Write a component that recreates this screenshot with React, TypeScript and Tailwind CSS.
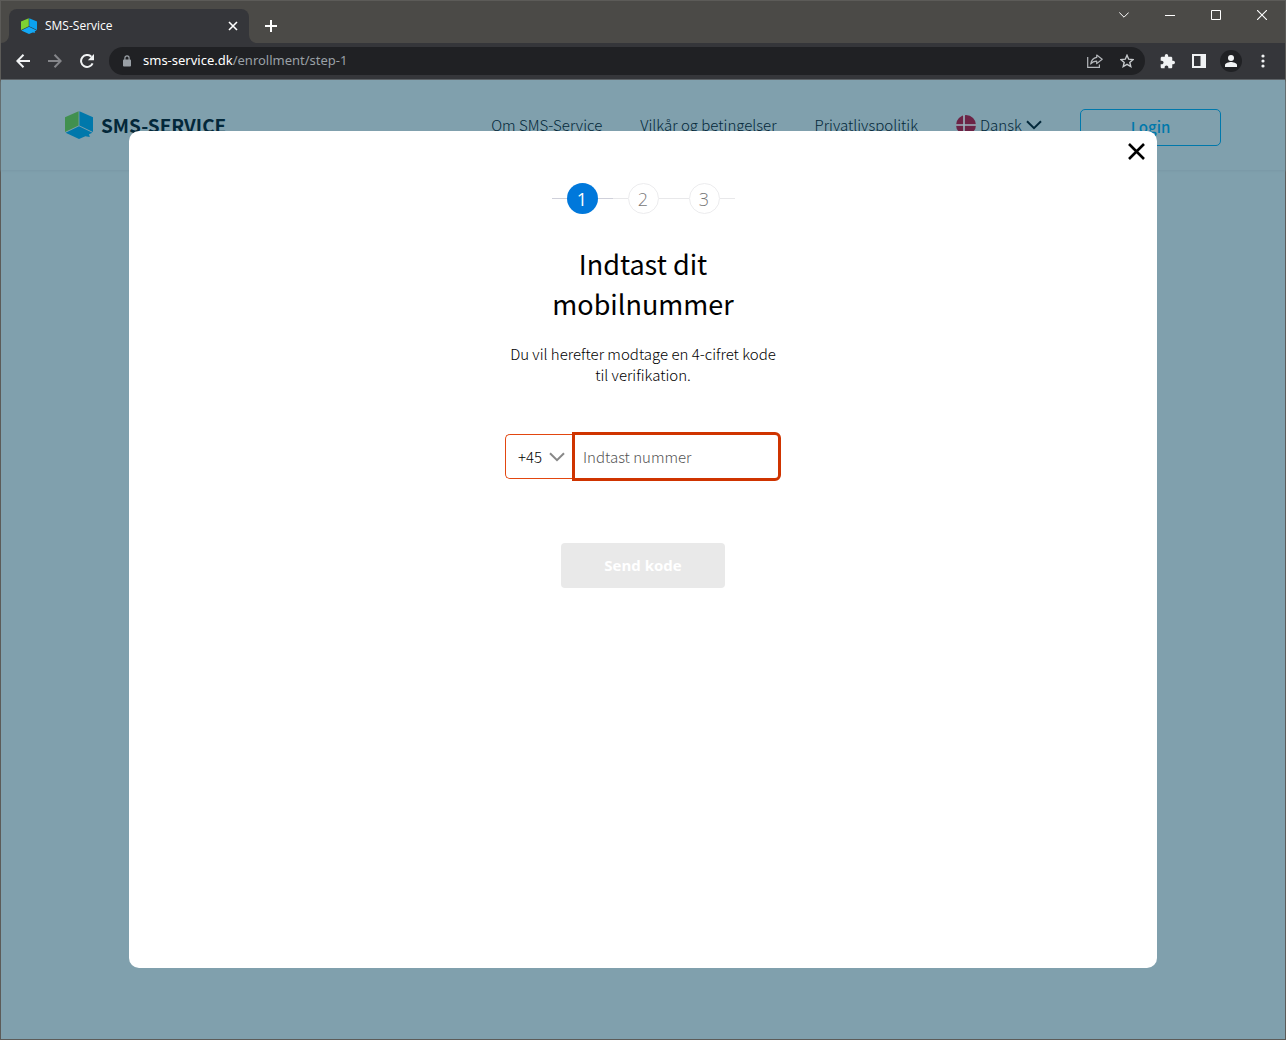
import { clsx } from "clsx";

const navLinks = [
  { label: "Om SMS-Service", href: "#om" },
  { label: "Vilkår og betingelser", href: "#vilkaar" },
  { label: "Privatlivspolitik", href: "#privatliv" },
];

const steps = [1, 2, 3];

function Cube({ className, left, right, bottom }: { className: string; left: string; right: string; bottom: string }) {
  return (
    <svg viewBox="0 0 28 28" className={className} aria-hidden="true">
      <path d="M13.6 0.3V14.4L0 21V6.2Z" fill={left} />
      <path d="M14.4 0.3L28 6.2V21L14.4 14.4Z" fill={right} />
      <path d="M14 15.2L27.4 21.8L24 23.3L24.8 26L20.4 25.2L14 28L0.6 21.8Z" fill={bottom} />
    </svg>
  );
}

function Chevron({ className }: { className: string }) {
  return (
    <svg viewBox="0 0 16 10" className={className} fill="none" stroke="currentColor" strokeWidth="2" aria-hidden="true">
      <path d="M1 1.2L8 8.2L15 1.2" />
    </svg>
  );
}

function TabStrip() {
  return (
    <div className="flex h-[42px] items-end bg-[#4b4a47] pl-2">
      <div className="relative flex h-[34px] w-[240px] items-center rounded-t-lg bg-[#35363a] pl-3 pr-2">
        <svg viewBox="0 0 8 8" className="absolute bottom-0 -left-2 size-2" aria-hidden="true">
          <path d="M8 0V8H0A8 8 0 0 0 8 0Z" fill="#35363a" />
        </svg>
        <svg viewBox="0 0 8 8" className="absolute bottom-0 -right-2 size-2" aria-hidden="true">
          <path d="M0 0V8H8A8 8 0 0 1 0 0Z" fill="#35363a" />
        </svg>
        <Cube className="size-4" left="#7ed032" right="#0ba1ee" bottom="#13a8f5" />
        <span className="ml-2 flex-1 text-xs text-white">SMS-Service</span>
        <button type="button" aria-label="Close tab" className="flex size-4 items-center justify-center text-white">
          <svg viewBox="0 0 10 10" className="size-[10px]" stroke="currentColor" strokeWidth="1.6">
            <path d="M1 1L9 9M9 1L1 9" />
          </svg>
        </button>
      </div>
      <button type="button" aria-label="New tab" className="ml-2 flex h-[34px] w-7 items-center justify-center text-white">
        <svg viewBox="0 0 12 12" className="size-3" stroke="currentColor" strokeWidth="2">
          <path d="M6 0V12M0 6H12" />
        </svg>
      </button>
      <div className="ml-auto flex self-start text-white">
        <button type="button" aria-label="Search tabs" className="flex h-7 w-[46px] items-center justify-center">
          <svg viewBox="0 0 10 6" className="h-[6px] w-[10px]" fill="none" stroke="currentColor" strokeWidth="1">
            <path d="M0.3 0.5L5 5.2L9.7 0.5" />
          </svg>
        </button>
        <button type="button" aria-label="Minimize" className="flex h-7 w-[46px] items-center justify-center">
          <svg viewBox="0 0 10 10" className="size-[10px]" stroke="currentColor" strokeWidth="1">
            <path d="M0 5.5H10" />
          </svg>
        </button>
        <button type="button" aria-label="Maximize" className="flex h-7 w-[46px] items-center justify-center">
          <svg viewBox="0 0 10 10" className="size-[10px]" fill="none" stroke="currentColor" strokeWidth="1">
            <path d="M0.5 0.5H9.5V9.5H0.5Z" />
          </svg>
        </button>
        <button type="button" aria-label="Close" className="flex h-7 w-[46px] items-center justify-center">
          <svg viewBox="0 0 10 10" className="size-[10px]" stroke="currentColor" strokeWidth="1.1">
            <path d="M0 0L10 10M10 0L0 10" />
          </svg>
        </button>
      </div>
    </div>
  );
}

function Toolbar() {
  return (
    <div className="flex h-[37px] items-center border-b border-[#5c5e61] bg-[#35363a] px-[6px] text-[#f1f3f4]">
      <button type="button" aria-label="Back" className="flex size-8 items-center justify-center">
        <svg viewBox="0 0 14 14" className="size-[14px]" fill="none" stroke="currentColor" strokeWidth="2">
          <path d="M14 7H1.5M7.5 0.8L1.3 7L7.5 13.2" />
        </svg>
      </button>
      <button type="button" aria-label="Forward" disabled className="flex size-8 items-center justify-center text-[#85868a]">
        <svg viewBox="0 0 14 14" className="size-[14px]" fill="none" stroke="currentColor" strokeWidth="2">
          <path d="M0 7H12.5M6.5 0.8L12.7 7L6.5 13.2" />
        </svg>
      </button>
      <button type="button" aria-label="Reload" className="flex size-8 items-center justify-center">
        <svg viewBox="0 0 14 14" className="size-[14px]">
          <path d="M12.6 9.3A6 6 0 1 1 11.3 2.7" fill="none" stroke="currentColor" strokeWidth="2" />
          <path d="M14 0V6.2H7.8Z" fill="currentColor" />
        </svg>
      </button>
      <div className="ml-[6px] flex h-7 flex-1 items-center rounded-full bg-[#202124] pr-[2px] pl-[14px]">
        <svg viewBox="0 0 8 12" className="h-3 w-2" aria-hidden="true">
          <path d="M1.9 5V3A2.1 2.1 0 0 1 6.1 3V5" fill="none" stroke="#9aa0a6" strokeWidth="1.2" />
          <rect x="0" y="4.4" width="8" height="7" rx="0.9" fill="#9aa0a6" />
        </svg>
        <p className="ml-3 flex-1 font-['Noto_Sans',sans-serif] text-[13px] text-[#9aa0a6]">
          <span className="text-white">sms-service.dk</span>/enrollment/step-1
        </p>
        <button type="button" aria-label="Share" className="flex size-8 items-center justify-center text-[#b5b8bc]">
          <svg viewBox="0 0 16 14" className="h-[14px] w-4" fill="none" stroke="currentColor" strokeWidth="1.2">
            <path d="M0.7 3V13.3H12.4V10.5" />
            <path d="M9.7 1L15.2 5.2L9.7 9.6V7.2C7 7.2 5.2 8 3.7 10C4.2 6.6 6 4 9.7 3.4Z" strokeLinejoin="round" />
          </svg>
        </button>
        <button type="button" aria-label="Bookmark this tab" className="flex size-8 items-center justify-center text-[#c6c9cc]">
          <svg viewBox="0 0 14 14" className="size-[14px]" fill="none" stroke="currentColor" strokeWidth="1.4">
            <path d="M7 1.3L8.7 5.2L13 5.6L9.8 8.4L10.8 12.6L7 10.4L3.2 12.6L4.2 8.4L1 5.6L5.3 5.2Z" />
          </svg>
        </button>
      </div>
      <div className="ml-[6px] flex items-center">
        <button type="button" aria-label="Extensions" className="flex size-8 items-center justify-center">
          <svg viewBox="1 1 22 22" className="size-[15px]" fill="currentColor">
            <path d="M20.5 11H19V7c0-1.1-.9-2-2-2h-4V3.5a2.5 2.5 0 0 0-5 0V5H4c-1.1 0-1.99.9-1.99 2v3.8H3.5c1.49 0 2.7 1.21 2.7 2.7s-1.21 2.7-2.7 2.7H2V20c0 1.1.9 2 2 2h3.8v-1.5c0-1.49 1.21-2.7 2.7-2.7s2.7 1.21 2.7 2.7V22H17c1.1 0 2-.9 2-2v-4h1.5a2.5 2.5 0 0 0 0-5Z" />
          </svg>
        </button>
        <button type="button" aria-label="Side panel" className="flex size-8 items-center justify-center">
          <svg viewBox="0 0 14 14" className="size-[14px]" fill="currentColor">
            <path d="M0 0H14V14H0ZM2 2V12H8.5V2Z" fillRule="evenodd" />
          </svg>
        </button>
        <button type="button" aria-label="Profile" className="flex size-8 items-center justify-center">
          <svg viewBox="0 0 22 22" className="size-[22px]">
            <circle cx="11" cy="11" r="11" fill="#202124" />
            <circle cx="11" cy="8" r="3" fill="currentColor" />
            <path d="M5 17V15C5 13 9 12 11 12S17 13 17 15V17Z" fill="currentColor" />
          </svg>
        </button>
        <button type="button" aria-label="Menu" className="flex size-8 items-center justify-center">
          <svg viewBox="0 0 4 14" className="h-[14px] w-1" fill="currentColor">
            <circle cx="2" cy="2" r="1.6" />
            <circle cx="2" cy="7" r="1.6" />
            <circle cx="2" cy="12" r="1.6" />
          </svg>
        </button>
      </div>
    </div>
  );
}

function SiteHeader() {
  return (
    <header className="flex h-[90px] items-center px-16 font-['Noto_Sans_CJK_SC',sans-serif] text-[#03283a] shadow-[0_1px_2px_#7898a6]">
      <a href="#top" className="flex items-center">
        <Cube className="size-7" left="#41904f" right="#0078ab" bottom="#0078ab" />
        <span className="ml-2 text-[19px] font-bold">SMS-SERVICE</span>
      </a>
      <nav className="ml-auto flex items-center gap-[38px] text-[15px] font-light">
        {navLinks.map((link) => (
          <a key={link.href} href={link.href}>
            {link.label}
          </a>
        ))}
        <div className="flex items-center">
          <svg viewBox="0 0 20 20" className="size-5" aria-hidden="true">
            <circle cx="10" cy="10" r="10" fill="#6c2346" />
            <path d="M8 0V20M0 10H20" stroke="#9db4bf" strokeWidth="1.6" />
          </svg>
          <select aria-label="Sprog" className="mx-1 h-6 appearance-none bg-transparent leading-6">
            <option>Dansk</option>
          </select>
          <Chevron className="h-[10px] w-4" />
        </div>
        <button
          type="button"
          className="mt-1 h-[37px] w-[141px] rounded-[5px] border border-[#0078ab] font-medium text-[#0078ab]"
        >
          Login
        </button>
      </nav>
    </header>
  );
}

function Stepper({ current }: { current: number }) {
  return (
    <ol className="flex">
      {steps.map((step) => (
        <li key={step} className="flex items-center">
          <span className={clsx("h-px w-[15px]", step === current ? "bg-[#cfd0da]" : "bg-[#e8e8ea]")} />
          <span
            className={clsx(
              "flex size-[31px] items-center justify-center rounded-full font-['Open_Sans',sans-serif] text-lg",
              step === current ? "bg-[#0078db] text-white" : "border border-[#ececee] font-light text-[#777]",
            )}
          >
            {step}
          </span>
          <span className={clsx("h-px w-[15px]", step === current ? "bg-[#cfd0da]" : "bg-[#e8e8ea]")} />
        </li>
      ))}
    </ol>
  );
}

function EnrollmentDialog() {
  return (
    <div
      role="dialog"
      aria-labelledby="dialog-title"
      className="relative flex flex-1 flex-col items-center rounded-[10px] bg-white pt-[52px] font-['Noto_Sans_CJK_SC',sans-serif] text-black"
    >
      <button type="button" aria-label="Luk" className="absolute top-3 right-3">
        <svg viewBox="0 0 17 17" className="size-[17px]" stroke="currentColor" strokeWidth="2.6">
          <path d="M1 1L16 16M16 1L1 16" />
        </svg>
      </button>
      <Stepper current={1} />
      <h1 id="dialog-title" className="mt-[30px] w-[270px] text-center text-[27px] leading-10">
        Indtast dit mobilnummer
      </h1>
      <p className="mt-[19px] w-[270px] text-center text-[15px] leading-[21px] font-light">
        Du vil herefter modtage en 4-cifret kode til verifikation.
      </p>
      <form className="mt-[47px] flex flex-col items-center">
        <div className="flex items-center">
          <div className="flex h-[45px] w-[67px] items-center rounded-l-[5px] border border-r-0 border-[#e2460f] pl-3 text-[#888]">
            <select
              aria-label="Landekode"
              className="mr-[6px] h-6 appearance-none bg-transparent text-[15px] leading-6 font-light text-black"
            >
              <option>+45</option>
            </select>
            <Chevron className="h-[10px] w-4" />
          </div>
          <input
            type="tel"
            aria-label="Mobilnummer"
            placeholder="Indtast nummer"
            className="h-[49px] w-[209px] rounded-r-[6px] border-[3px] border-[#cf3400] px-2 text-[15px] font-light outline-none placeholder:text-[#555]"
          />
        </div>
        <button
          type="submit"
          disabled
          className="mt-[62px] h-[45px] w-[164px] rounded bg-[#e9e9e9] font-['Open_Sans',sans-serif] text-[15px] font-bold text-white"
        >
          Send kode
        </button>
      </form>
    </div>
  );
}

export default function App() {
  return (
    <div className="flex min-h-screen flex-col border border-[#5c5b58] bg-[#80a0ad] font-['Open_Sans',sans-serif]">
      <TabStrip />
      <Toolbar />
      <main className="relative flex flex-1 flex-col">
        <SiteHeader />
        <div className="absolute inset-0 flex flex-col px-[10%] pt-[51px] pb-[71px]">
          <EnrollmentDialog />
        </div>
      </main>
    </div>
  );
}
